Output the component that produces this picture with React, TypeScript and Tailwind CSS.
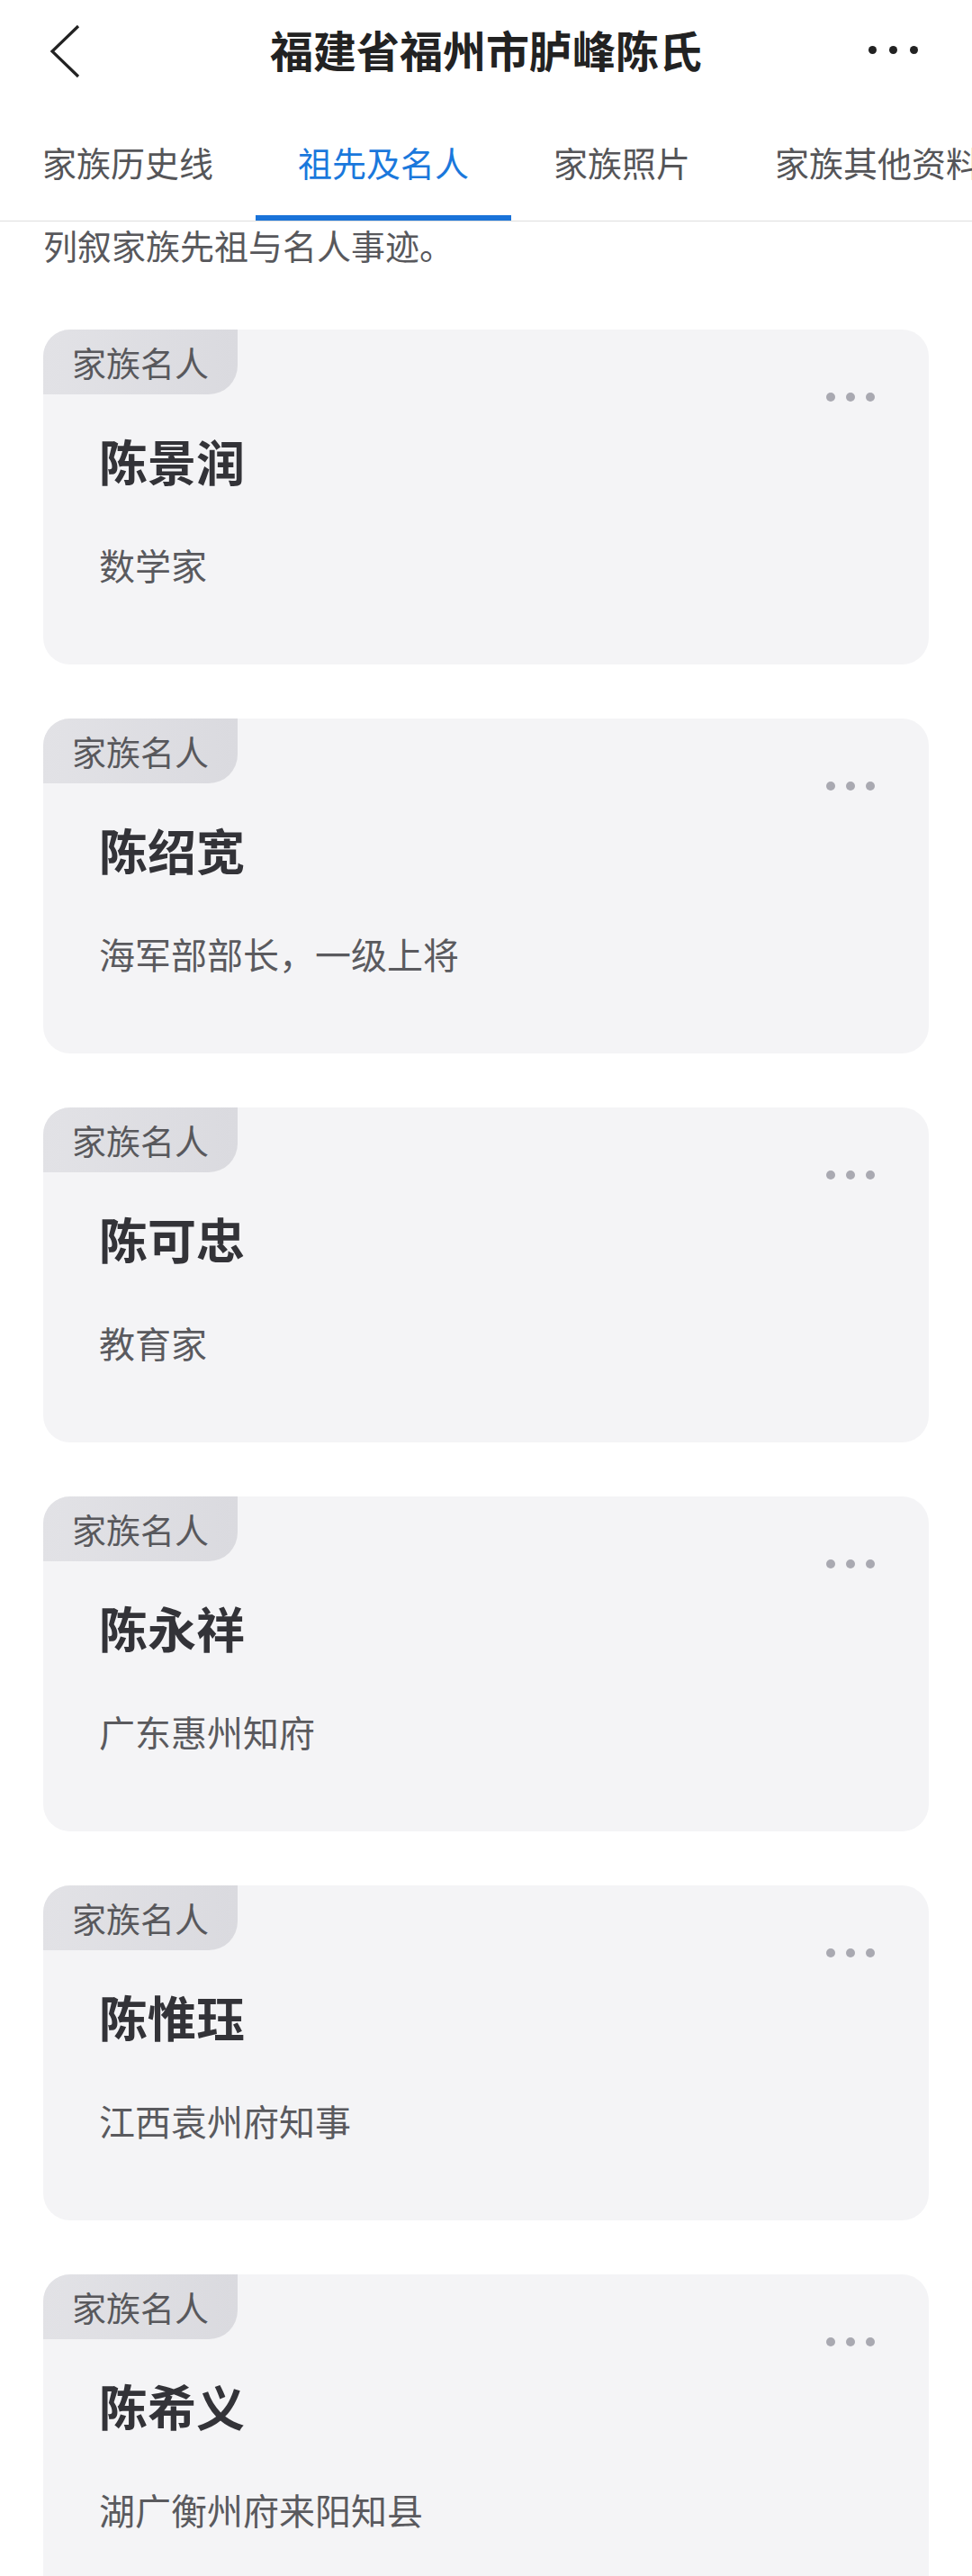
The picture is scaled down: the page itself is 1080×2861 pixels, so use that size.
import React from 'react'

const cjk = { fontFamily: '"Noto Sans CJK SC", "Noto Sans", sans-serif' }

const people = [
  { name: '陈景润', title: '数学家' },
  { name: '陈绍宽', title: '海军部部长，一级上将' },
  { name: '陈可忠', title: '教育家' },
  { name: '陈永祥', title: '广东惠州知府' },
  { name: '陈惟珏', title: '江西袁州府知事' },
  { name: '陈希义', title: '湖广衡州府来阳知县' },
]

const tabs = ['家族历史线', '祖先及名人', '家族照片', '家族其他资料']

function PersonCard({ name, title }: { name: string; title: string }) {
  return (
    <div className="relative mx-[48px] mb-[60px] h-[372px] rounded-[30px] bg-[#f4f4f6]">
      <div className="flex h-[72px] w-[216px] items-center justify-center rounded-tl-[30px] rounded-br-[32px] bg-gradient-to-r from-[#e2e2e6] to-[#dadadf]">
        <span className="text-[38px] leading-none text-[#58585c]">家族名人</span>
      </div>
      <div className="absolute right-[60px] top-[70px] flex gap-[12px]">
        <span className="h-[10px] w-[10px] rounded-full bg-[#a9a9b1]" />
        <span className="h-[10px] w-[10px] rounded-full bg-[#a9a9b1]" />
        <span className="h-[10px] w-[10px] rounded-full bg-[#a9a9b1]" />
      </div>
      <div className="mt-[47px] pl-[62px] text-[54px] font-bold leading-none text-[#333338]">{name}</div>
      <div className="mt-[68px] pl-[62px] text-[40px] leading-none text-[#5a5a5e]">{title}</div>
    </div>
  )
}

export default function App() {
  return (
    <div className="min-h-screen w-[1080px] overflow-hidden bg-white" style={cjk}>
      {/* top bar */}
      <div className="relative flex h-[110px] items-center justify-center">
        <svg className="absolute left-[52px] top-[26px]" width="40" height="62" viewBox="0 0 40 62" fill="none">
          <path d="M35 3 L6 31 L35 59" stroke="#222" strokeWidth="3.2" />
        </svg>
        <h1 className="-mt-[3px] text-[48px] font-bold leading-none text-[#222]">福建省福州市胪峰陈氏</h1>
        <div className="absolute right-[60px] top-[51px] flex gap-[14px]">
          <span className="h-[9px] w-[9px] rounded-full bg-[#222]" />
          <span className="h-[9px] w-[9px] rounded-full bg-[#222]" />
          <span className="h-[9px] w-[9px] rounded-full bg-[#222]" />
        </div>
      </div>

      {/* tabs */}
      <div className="flex h-[136px] border-b border-[#dedede] whitespace-nowrap">
        {tabs.map((t, i) => (
          <div key={t} className="relative shrink-0 px-[47px] pt-[51px]">
            <span className={`text-[38px] leading-none ${i === 1 ? 'text-[#1a78dc]' : 'text-[#555558]'}`}>{t}</span>
            {i === 1 && <div className="absolute bottom-0 left-0 right-0 h-[6px] bg-[#1a73d9]" />}
          </div>
        ))}
      </div>

      <p className="mt-[7px] pl-[48px] text-[38px] leading-none text-[#58585c]">列叙家族先祖与名人事迹。</p>

      <div className="mt-[75px]">
        {people.map((p) => (
          <PersonCard key={p.name} name={p.name} title={p.title} />
        ))}
      </div>
    </div>
  )
}
